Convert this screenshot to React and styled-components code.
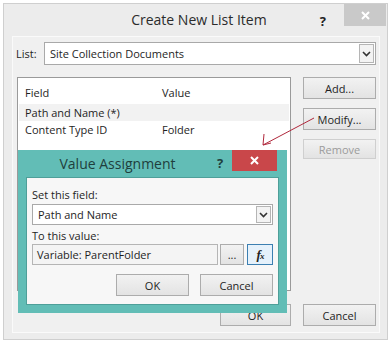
import React from 'react'
import styled, { createGlobalStyle } from 'styled-components'

const Global = createGlobalStyle`
  body {
    margin: 0;
    background: #ffffff;
    font-family: "Open Sans", "Noto Sans", sans-serif;
    font-size: 11px;
    color: #1e1e1e;
  }
`

const Frame = styled.div`
  position: relative;
  margin: 3px 0 0 3px;
  width: 385px;
  height: 337px;
  box-sizing: border-box;
  background: #ececec;
  border: 1px solid #cfcfcf;
  display: flex;
  flex-direction: column;
`

const TitleBar = styled.div`
  height: 32px;
  display: flex;
  align-items: flex-start;
  position: relative;
`

const Title = styled.div`
  flex: ${p => (p.$w ? 'none' : 1)};
  width: ${p => (p.$w ? p.$w + 'px' : 'auto')};
  text-align: center;
  font-size: 14px;
  line-height: ${p => p.$lh || 32}px;
  color: ${p => p.$color || '#2b2b2b'};
  padding-left: ${p => p.$pad || 0}px;
`

const Help = styled.div`
  font-weight: 700;
  font-size: 13px;
  line-height: 1;
  color: ${p => p.$color || '#222'};
  margin: ${p => p.$top}px ${p => p.$right}px 0 0;
`

const CloseBtn = styled.div`
  width: ${p => p.$w}px;
  height: ${p => p.$h}px;
  background: ${p => p.$bg};
  display: flex;
  align-items: center;
  justify-content: center;
  margin-right: ${p => p.$right}px;
`

const Panel = styled.div`
  flex: 1;
  margin: 0 7px 6px 8px;
  background: #f0f0f0;
  border: 1px solid #fafafa;
  display: flex;
  flex-direction: column;
  padding: 5px 3px 0 3px;
`

const Row = styled.div`
  display: flex;
  align-items: ${p => p.$align || 'center'};
  gap: ${p => p.$gap || 0}px;
  margin-top: ${p => p.$mt || 0}px;
  justify-content: ${p => p.$justify || 'flex-start'};
`

const Label = styled.div`
  width: ${p => (p.$w ? p.$w + 'px' : 'auto')};
  margin-top: ${p => p.$mt || 0}px;
`

const Select = styled.div`
  flex: 1;
  height: ${p => p.$h}px;
  box-sizing: border-box;
  background: #fff;
  border: 1px solid #a9a9a9;
  display: flex;
  align-items: center;
  padding-left: 5px;
`

const SelectText = styled.div`
  flex: 1;
`

const Chevron = styled.div`
  width: 15px;
  height: ${p => p.$h}px;
  box-sizing: border-box;
  border: 1px solid #b5b5b5;
  background: #f3f3f3;
  margin-right: 1px;
  display: flex;
  align-items: center;
  justify-content: center;
`

const Body = styled.div`
  display: flex;
  gap: 12px;
  margin-top: 12px;
  padding-left: 1px;
`

const ListBox = styled.div`
  width: 278px;
  height: 214px;
  box-sizing: border-box;
  background: #fff;
  border: 1px solid #9a9a9a;
  padding: 2px 1px;
`

const ListRow = styled.div`
  display: flex;
  height: ${p => p.$h || 17}px;
  align-items: center;
  padding-left: 6px;
  background: ${p => (p.$sel ? '#f2f2f2' : 'transparent')};
`

const Cell = styled.div`
  width: ${p => p.$w}px;
`

const ButtonCol = styled.div`
  display: flex;
  flex-direction: column;
  gap: 9px;
`

const Button = styled.div`
  width: ${p => p.$w || 73}px;
  height: ${p => p.$h || 22}px;
  box-sizing: border-box;
  background: linear-gradient(#f2f2f2, #e3e3e3);
  border: 1px solid ${p => (p.$off ? '#cfcfcf' : '#acacac')};
  color: ${p => (p.$off ? '#9b9b9b' : '#1e1e1e')};
  display: flex;
  align-items: center;
  justify-content: center;
`

const Footer = styled.div`
  display: flex;
  justify-content: flex-end;
  gap: 12px;
  margin-top: 13px;
`

const Sub = styled.div`
  position: absolute;
  left: 14px;
  top: 146px;
  width: 269px;
  height: 163px;
  box-sizing: border-box;
  background: #62bdb6;
  display: flex;
  flex-direction: column;
  padding: 0 8px 8px 8px;
`

const SubTitleBar = styled.div`
  height: 27px;
  display: flex;
  align-items: flex-start;
  margin: 0 -8px;
`

const SubPanel = styled.div`
  flex: 1;
  background: #f7f7f7;
  border: 1px solid #4e9f99;
  padding: 0 5px;
  display: flex;
  flex-direction: column;
`

const Input = styled.div`
  flex: 1;
  height: 21px;
  box-sizing: border-box;
  background: #f4f4f4;
  border: 1px solid #b5b5b5;
  display: flex;
  align-items: center;
  padding-left: 4px;
`

const SmallBtn = styled.div`
  width: ${p => p.$w}px;
  height: 21px;
  box-sizing: border-box;
  background: ${p => (p.$hot ? '#e5f1fb' : 'linear-gradient(#f2f2f2, #e3e3e3)')};
  border: 1px solid ${p => (p.$hot ? '#3c7fb1' : '#acacac')};
  display: flex;
  align-items: center;
  justify-content: center;
  margin-left: ${p => p.$ml || 0}px;
`

const Fx = styled.span`
  font-family: "Liberation Serif", serif;
  font-style: italic;
  font-weight: 700;
  font-size: 13px;
  color: #222;
  letter-spacing: -1px;
  & > small {
    font-size: 9px;
  }
`

const Arrow = styled.svg`
  position: absolute;
  left: 0;
  top: 0;
  pointer-events: none;
`

const X = ({ color = '#fff' }) => (
  <svg width="9" height="9" viewBox="0 0 9 9">
    <path d="M1 1L8 8M8 1L1 8" stroke={color} strokeWidth="2" />
  </svg>
)

const Down = () => (
  <svg width="9" height="6" viewBox="0 0 9 6">
    <path d="M1 1L4.5 4.5L8 1" stroke="#333" strokeWidth="1.6" fill="none" />
  </svg>
)

export default function App() {
  return (
    <>
      <Global />
      <Frame>
        <TitleBar>
          <Title $pad={74}>Create New List Item</Title>
          <Help $top={11} $right={18}>?</Help>
          <CloseBtn $w={42} $h={22} $bg="#c9c9c9" $right={1}>
            <X />
          </CloseBtn>
        </TitleBar>
        <Panel>
          <Row $gap={5}>
            <Label $w={23}>List:</Label>
            <Select $h={23}>
              <SelectText>Site Collection Documents</SelectText>
              <Chevron $h={19}><Down /></Chevron>
            </Select>
          </Row>
          <Body>
            <ListBox>
              <ListRow $h={24}>
                <Cell $w={137}>Field</Cell>
                <Cell>Value</Cell>
              </ListRow>
              <ListRow $sel>
                <Cell $w={137}>Path and Name (*)</Cell>
              </ListRow>
              <ListRow>
                <Cell $w={137}>Content Type ID</Cell>
                <Cell>Folder</Cell>
              </ListRow>
            </ListBox>
            <ButtonCol>
              <Button>Add...</Button>
              <Button>Modify...</Button>
              <Button $off $h={20}>Remove</Button>
            </ButtonCol>
          </Body>
          <Footer>
            <Button $w={71}>OK</Button>
            <Button $w={73}>Cancel</Button>
          </Footer>
        </Panel>

        <Arrow width="385" height="200">
          <path d="M310 114L259 141" stroke="#b0283c" strokeWidth="1" fill="none" />
          <path d="M260 130L259 141L267 139" stroke="#b0283c" strokeWidth="1" fill="none" />
        </Arrow>

        <Sub>
          <SubTitleBar>
            <Title $color="#1f3f3d" $w={199} $lh={27}>
              Value Assignment
            </Title>
            <Help $top={7} $right={9} $color="#1f3f3d">?</Help>
            <CloseBtn $w={45} $h={21} $bg="#c9474a" $right={8}>
              <X />
            </CloseBtn>
          </SubTitleBar>
          <SubPanel>
            <Label $mt={9}>Set this field:</Label>
            <Row $mt={2}>
              <Select $h={21}>
                <SelectText>Path and Name</SelectText>
                <Chevron $h={17}><Down /></Chevron>
              </Select>
            </Row>
            <Label $mt={3}>To this value:</Label>
            <Row $mt={1}>
              <Input>Variable: ParentFolder</Input>
              <SmallBtn $w={24} $ml={2}>...</SmallBtn>
              <SmallBtn $w={26} $ml={3} $hot>
                <Fx>f<small>x</small></Fx>
              </SmallBtn>
            </Row>
            <Row $mt={9} $justify="flex-end" $gap={11}>
              <Button $w={73}>OK</Button>
              <Button $w={73}>Cancel</Button>
            </Row>
          </SubPanel>
        </Sub>
      </Frame>
    </>
  )
}
